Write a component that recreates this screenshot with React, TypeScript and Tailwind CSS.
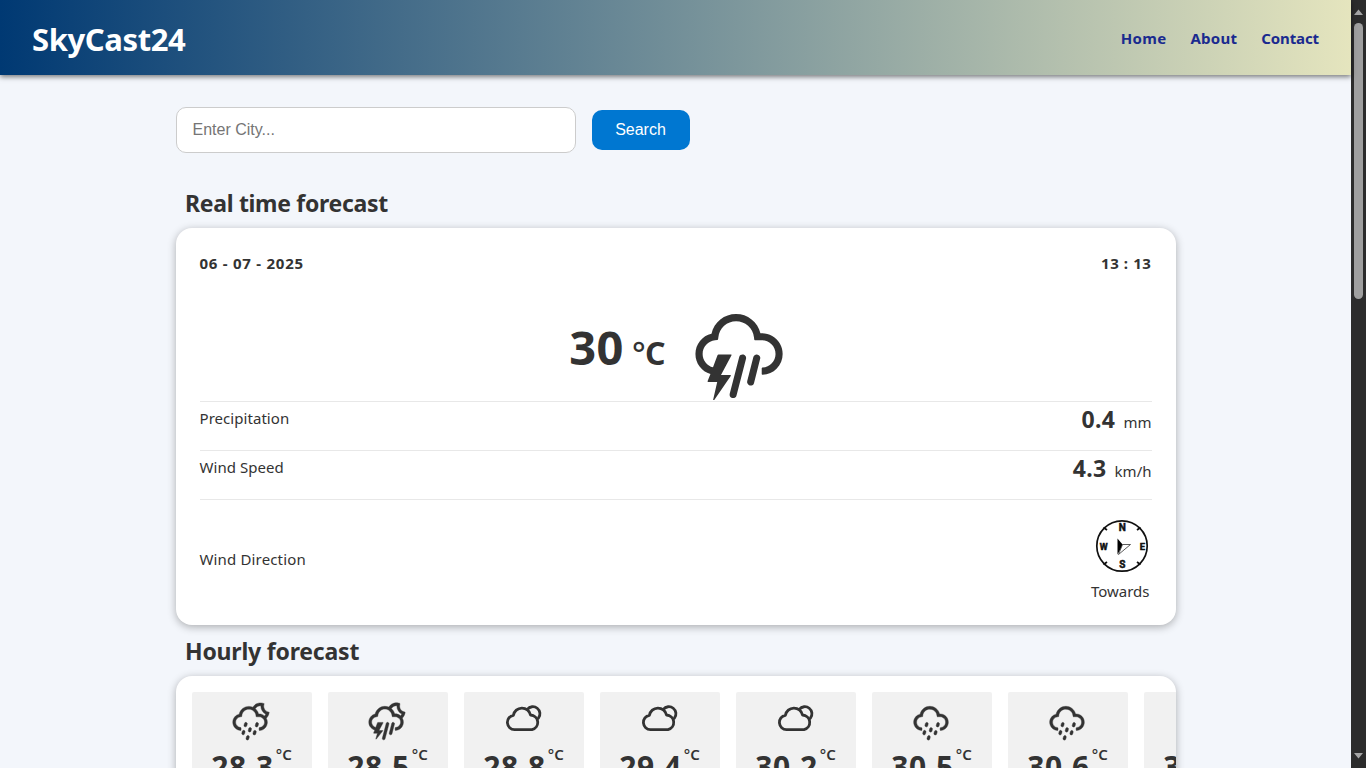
import React from "react";
import {
  WiThunderstorm,
  WiNightAltThunderstorm,
  WiNightAltShowers,
  WiShowers,
} from "react-icons/wi";

function PartlyCloudy({ className }: { className?: string }) {
  return (
    <svg viewBox="0 0 50 50" className={className}>
      <g fill="none" stroke="currentColor" strokeWidth="2.8" strokeLinecap="round" strokeLinejoin="round">
        <path d="M16.500 35.600A7.200 7.200 0 0 1 15.400 21.300A8.700 8.700 0 0 1 32.500 21A7.400 7.400 0 0 1 34 35.600Z" />
        <path d="M29.300 15.400A7 7 0 1 1 40.400 24.200" />
      </g>
    </svg>
  );
}

const hours: { icon: React.ComponentType<{ className?: string }>; temp: string }[] = [
  { icon: WiNightAltShowers, temp: "28.3" },
  { icon: WiNightAltThunderstorm, temp: "28.5" },
  { icon: PartlyCloudy, temp: "28.8" },
  { icon: PartlyCloudy, temp: "29.4" },
  { icon: PartlyCloudy, temp: "30.2" },
  { icon: WiShowers, temp: "30.5" },
  { icon: WiShowers, temp: "30.6" },
  { icon: WiShowers, temp: "30.8" },
];

function Header() {
  return (
    <header className="relative flex h-[75px] shrink-0 items-center justify-between bg-linear-to-r from-[#003973] to-[#e5e5be] px-8 shadow-[0_2px_5px_rgba(0,0,0,0.5)] [--tw-gradient-position:to_right]">
      <h1 className="pt-1 text-[31px] leading-[43px] font-bold tracking-[-0.4px] text-white">SkyCast24</h1>
      <nav className="flex gap-6 text-[15px] leading-6 font-bold text-[#1a2a8f]">
        <a className="tracking-[0.3px]">Home</a>
        <a className="tracking-[0.25px]">About</a>
        <a className="tracking-[-0.1px]">Contact</a>
      </nav>
    </header>
  );
}

function Compass() {
  return (
    <svg width="54" height="54" viewBox="0 0 54 54" className="block">
      <circle cx="27" cy="27" r="25.2" fill="#fff" stroke="#111" strokeWidth="1.7" />
      <path d="M8.500 8.500l3.500 2.500M45.500 8.500l-3.500 2.500M8.500 45.500l3.500-2.500M45.500 45.500l-3.500-2.500" stroke="#111" strokeWidth="1.8" />
      <path d="M22.500 19.500v16l5.500-9.500z" fill="#000" />
      <path d="M27.500 25.500h8L23.500 35.500z" fill="#fff" stroke="#333" strokeWidth=".8" />
      <g fill="#111" stroke="#111" strokeWidth=".5" fontFamily="Roboto, sans-serif" fontWeight="700" fontSize="10" textAnchor="middle">
        <text x="27.300" y="12.200">N</text>
        <text x="8.600" y="30.500" fontSize="9">W</text>
        <text x="47.300" y="30.500" fontSize="9.500">E</text>
        <text x="27.300" y="49.300">S</text>
      </g>
    </svg>
  );
}

function Metric({ label, value, unit }: { label: string; value: string; unit: string }) {
  return (
    <div className="flex h-[49px] justify-between border-t border-[#e8e8e8] pt-1">
      <span className="text-[15px] leading-6 tracking-[0.05px]">{label}</span>
      <div className="flex items-baseline gap-2 leading-[26px]">
        <span className="text-[23px] font-bold tracking-[0.4px]">{value}</span>
        <span className="text-[15px]">{unit}</span>
      </div>
    </div>
  );
}

function Scrollbar() {
  return (
    <div className="flex w-[15px] shrink-0 flex-col items-center bg-[#2c2c2c]">
      <svg width="15" height="23" viewBox="0 0 15 23" className="block shrink-0">
        <path d="M7.500 9.500L12 15H3z" fill="#a5a5a5" />
      </svg>
      <div className="h-[276px] w-[9px] shrink-0 rounded-full bg-[#9f9f9f]" />
      <div className="grow" />
      <svg width="15" height="20" viewBox="0 0 15 20" className="block shrink-0">
        <path d="M3 5h9l-4.500 5.500z" fill="#a5a5a5" />
      </svg>
    </div>
  );
}

export default function App() {
  return (
    <div className="flex h-screen overflow-hidden bg-[#f3f6fb] font-['Noto_Sans',sans-serif] text-[#333]">
      <div className="flex min-w-0 grow flex-col">
        <Header />
        <main className="mx-auto flex w-[1000px] shrink-0 flex-col pt-8">
          <div className="flex h-[46px] items-center gap-4 font-['Liberation_Sans',Arial,sans-serif] text-base">
            <input
              className="h-[46px] w-[400px] rounded-[10px] border border-[#ccc] bg-white px-4 outline-none placeholder:text-[#757575]"
              placeholder="Enter City..."
            />
            <button className="h-10 w-[98px] rounded-[10px] bg-[#0077d1] text-white">Search</button>
          </div>
          <h2 className="mt-[34px] pl-[9.500px] text-[23px] leading-8 font-bold tracking-[-0.31px]">Real time forecast</h2>
          <section className="mt-[9px] h-[397px] rounded-[16px] bg-white px-6 shadow-[0_2px_8px_rgba(0,0,0,0.3)]">
            <div className="flex justify-between pt-[23px] text-[15px] leading-6 font-bold">
              <span className="tracking-[0.75px]">06 - 07 - 2025</span>
              <span className="tracking-[0.6px]">13 : 13</span>
            </div>
            <div className="flex h-[126px] items-end justify-center">
              <div className="flex h-[91px] items-baseline gap-2 pl-px font-bold">
                <span className="text-[47px] leading-[74px] tracking-[0.5px]">30</span>
                <span className="text-[32px] leading-[48px] tracking-[-0.7px]">
                  <span className="font-medium">°</span>C
                </span>
              </div>
              <WiThunderstorm className="-mr-[19px] -mb-[8px] ml-[11px] size-[126px] shrink-0" />
            </div>
            <Metric label="Precipitation" value="0.4" unit="mm" />
            <Metric label="Wind Speed" value="4.3" unit="km/h" />
            <div className="flex h-[120px] items-center justify-between border-t border-[#e8e8e8] text-[15px]">
              <span className="tracking-[0.15px]">Wind Direction</span>
              <div className="-mr-px flex flex-col items-center pt-[2px]">
                <Compass />
                <span className="mt-[6px] pr-[3px] leading-6">Towards</span>
              </div>
            </div>
          </section>
          <h2 className="mt-[10px] pl-[9.500px] text-[23px] leading-8 font-bold tracking-[-0.2px]">Hourly forecast</h2>
          <section className="mt-[9px] h-[220px] overflow-hidden rounded-[16px] bg-white p-4 shadow-[0_2px_8px_rgba(0,0,0,0.3)]">
            <div className="flex gap-4">
              {hours.map(({ icon: Icon, temp }, i) => (
                <div key={i} className="flex h-[180px] w-[120px] shrink-0 flex-col items-center rounded-[2px] bg-[#f1f1f1] pt-[2px]">
                  <Icon className="mr-[2px] size-[50px] shrink-0 [stroke-width:0.25]" />
                  <div className="flex items-start gap-[2px] font-bold">
                    <span className="pt-[5px] text-[30px] leading-9 tracking-[0.7px]">{temp}</span>
                    <span className="pt-[2px] text-[15px] leading-[16px] font-semibold">
                      <span className="font-medium">°</span>C
                    </span>
                  </div>
                </div>
              ))}
            </div>
          </section>
        </main>
      </div>
      <Scrollbar />
    </div>
  );
}
